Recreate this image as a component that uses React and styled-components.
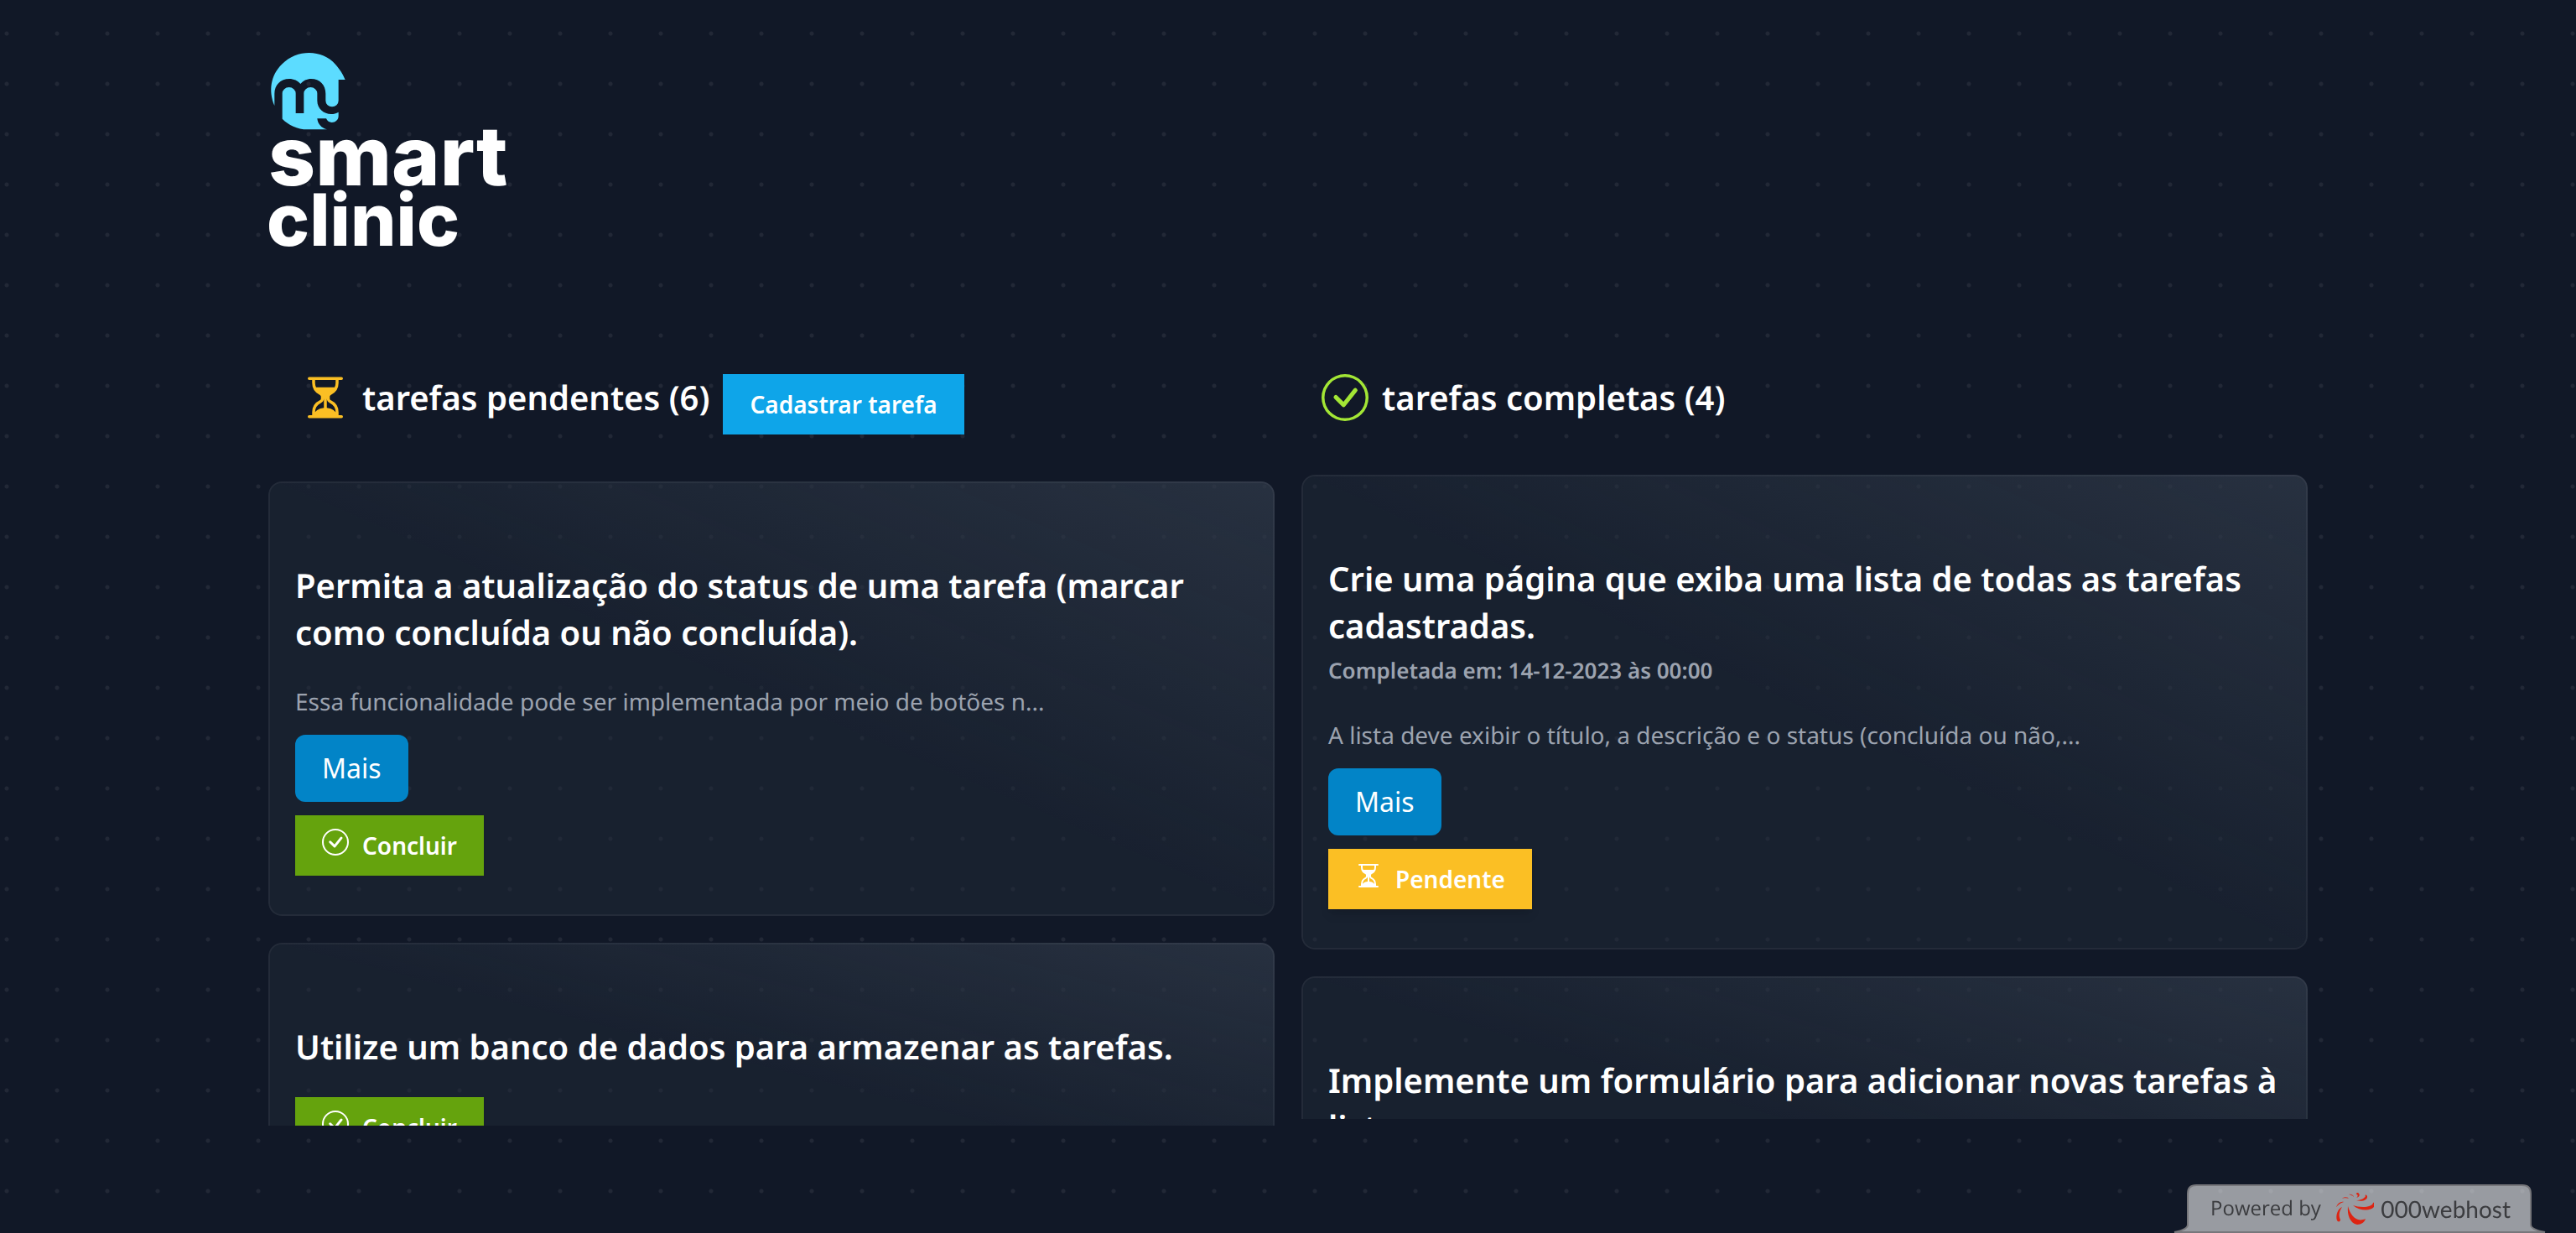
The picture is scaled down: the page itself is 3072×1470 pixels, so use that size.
import React from "react";
import styled, { createGlobalStyle } from "styled-components";
import { BsCheckCircle, BsHourglassSplit } from "react-icons/bs";

const GlobalStyle = createGlobalStyle`
  *, *::before, *::after { box-sizing: border-box; }
  body {
    margin: 0;
    background-color: #111827;
    font-family: "Noto Sans", "Open Sans", sans-serif;
    font-size: 32px;
    line-height: 48px;
    color: #fff;
    text-rendering: geometricPrecision;
  }
  h1, h2, h3, p { margin: 0; }
`;

const Page = styled.div`
  min-height: 100vh;
  background-image: radial-gradient(circle, rgba(255, 255, 255, 0.07) 2px, transparent 3px);
  background-size: 60px 60px;
  background-position: -22px 10px;
`;

const Container = styled.main`
  max-width: 2560px;
  margin: 0 auto;
  padding: 64px;
`;

const LogoSvg = styled.svg`
  display: block;
  width: 286px;
  height: 230px;
  overflow: visible;
`;

const LogoText = styled.text`
  font-family: Inter, sans-serif;
  font-weight: 800;
  font-size: ${(p) => p.$size}px;
  fill: #fff;
`;

const Board = styled.div`
  display: grid;
  grid-template-columns: repeat(2, minmax(0, 1fr));
  gap: 32px;
  margin-top: 152px;
`;

const ColumnHeader = styled.header`
  display: flex;
  align-items: flex-start;
  gap: 16px;
  padding-left: ${(p) => p.$indent}px;
  margin-bottom: ${(p) => p.$space}px;
`;

const HeaderIcon = styled.span`
  display: flex;
  color: ${(p) => p.$color};
`;

const ColumnTitle = styled.h2`
  font-size: 40px;
  line-height: 56px;
  font-weight: 600;
`;

const List = styled.div`
  display: flex;
  flex-direction: column;
  gap: 32px;
  height: 768px;
  overflow-y: auto;
  scrollbar-width: none;
`;

const CardBox = styled.article`
  display: flex;
  flex-direction: column;
  align-items: flex-start;
  flex-shrink: 0;
  padding: 96px 32px 48px;
  border-radius: 16px;
  background-color: rgba(31, 41, 55, 0.5);
  background-image: linear-gradient(to bottom left, rgba(55, 65, 81, 0.5), transparent, transparent);
  box-shadow: inset 0 0 0 0 #fff, inset 0 0 0 2px rgba(255, 255, 255, 0.05);
`;

const CardTitle = styled.h3`
  font-size: 40px;
  line-height: 56px;
  font-weight: 600;
`;

const CompletedAt = styled.div`
  height: 48px;
  color: #9ca3af;

  small {
    font-size: 26px;
    font-weight: 600;
  }
`;

const Description = styled.p`
  margin: 32px 0 16px;
  font-size: 28px;
  line-height: 46px;
  color: #9ca3af;
`;

const MoreButton = styled.button`
  border: 0;
  border-radius: 12px;
  padding: 16px 32px;
  background: #0284c7;
  color: #fff;
  font: inherit;
`;

const ActionButton = styled.button`
  display: flex;
  align-items: flex-start;
  gap: 16px;
  border: 0;
  padding: 16px 32px;
  margin-top: ${(p) => p.$top || 0}px;
  background: ${(p) => p.$color};
  color: #fff;
  font-family: inherit;
  font-size: 28px;
  line-height: 40px;
  font-weight: 600;
  box-shadow: ${(p) =>
    p.$raised
      ? "0 8px 12px -2px rgba(0, 0, 0, 0.1), 0 4px 8px -4px rgba(0, 0, 0, 0.1)"
      : "0 2px 4px rgba(0, 0, 0, 0.05)"};
`;

const HostBadge = styled.a`
  position: fixed;
  right: 36px;
  bottom: 0;
  display: flex;
  align-items: center;
  width: 444px;
  height: 58px;
  padding: 0 42px 0 44px;
  color: #3b3c3f;
  text-decoration: none;
  white-space: nowrap;
  font-family: "Open Sans", sans-serif;
  font-size: 24px;
  line-height: 32px;
`;

const BadgeShape = styled.svg`
  position: absolute;
  inset: 0;
  width: 100%;
  height: 100%;
`;

const BadgeLabel = styled.span`
  position: relative;
`;

const BadgeMark = styled.svg`
  position: relative;
  flex-shrink: 0;
  width: 48px;
  height: 40px;
  margin: 0 8px 0 auto;
`;

const BadgeBrand = styled.span`
  position: relative;
  font-family: Lato, sans-serif;
  font-size: 28px;
`;

function Logo() {
  return (
    <LogoSvg viewBox="60 72 858 690" role="img" aria-label="smart clinic">
      <path
        fill="#5cdcff"
        d="M82 258C60 205 68 150 108 110C165 53 255 58 300 110C318 130 328 148 335 165L311 165V240A23 22 0 0 1 265 240V215C265 184 244 162 213 162C198 162 184 169 175 180C166 169 151 162 135 162C104 162 82 184 82 215Z"
      />
      <path
        fill="#5cdcff"
        d="M110 305V214A24 22 0 0 1 158 214V285H187V214A24 22 0 0 1 235 214V240C235 269 258 288 285 288C294 288 303 286 311 281V295C311 309 300 318 287 318C278 318 271 313 267 304H235C237 323 248 337 270 343H200C163 343 132 327 110 305Z"
      />
      <LogoText x="60" y="543" $size={294}>smart</LogoText>
      <LogoText x="54" y="760" $size={258}>clinic</LogoText>
    </LogoSvg>
  );
}

const pending = [
  {
    title: "Permita a atualização do status de uma tarefa (marcar como concluída ou não concluída).",
    description: "Essa funcionalidade pode ser implementada por meio de botões n...",
  },
  { title: "Utilize um banco de dados para armazenar as tarefas." },
];

const completed = [
  {
    title: "Crie uma página que exiba uma lista de todas as tarefas cadastradas.",
    completedAt: "14-12-2023 às 00:00",
    description: "A lista deve exibir o título, a descrição e o status (concluída ou não,...",
  },
  { title: "Implemente um formulário para adicionar novas tarefas à lista." },
];

function Card({ task, done }) {
  return (
    <CardBox>
      <CardTitle>{task.title}</CardTitle>
      {task.completedAt && (
        <CompletedAt>
          <small>Completada em: {task.completedAt}</small>
        </CompletedAt>
      )}
      {task.description && (
        <>
          <Description>{task.description}</Description>
          <MoreButton type="button">Mais</MoreButton>
        </>
      )}
      <ActionButton
        type="button"
        $top={task.description ? 16 : 32}
        $color={done ? "#fbbf24" : "#65a30d"}
        $raised={done}
      >
        {done ? <BsHourglassSplit size={32} /> : <BsCheckCircle size={32} />}
        {done ? "Pendente" : "Concluir"}
      </ActionButton>
    </CardBox>
  );
}

export default function App() {
  return (
    <>
      <GlobalStyle />
      <Page>
        <Container>
          <Logo />
          <Board>
            <section>
              <ColumnHeader $indent={40} $space={56}>
                <HeaderIcon $color="#fbbf24">
                  <BsHourglassSplit size={56} />
                </HeaderIcon>
                <ColumnTitle>tarefas pendentes (6)</ColumnTitle>
                <ActionButton type="button" $color="#0ea5e9">
                  Cadastrar tarefa
                </ActionButton>
              </ColumnHeader>
              <List>
                {pending.map((task) => (
                  <Card key={task.title} task={task} />
                ))}
              </List>
            </section>
            <section>
              <ColumnHeader $indent={24} $space={64}>
                <HeaderIcon $color="#a3e635">
                  <BsCheckCircle size={56} />
                </HeaderIcon>
                <ColumnTitle>tarefas completas (4)</ColumnTitle>
              </ColumnHeader>
              <List>
                {completed.map((task) => (
                  <Card key={task.title} task={task} done />
                ))}
              </List>
            </section>
          </Board>
        </Container>
        <HostBadge href="#000webhost">
          <BadgeShape viewBox="0 0 444 58" preserveAspectRatio="none" aria-hidden="true">
            <path
              fill="rgba(255,255,255,0.57)"
              stroke="#77777b"
              strokeWidth="2"
              d="M1 57Q17 54 17 48V11Q17 1 27 1H416Q426 1 426 11V48Q426 54 443 57Z"
            />
          </BadgeShape>
          <BadgeLabel>Powered by</BadgeLabel>
          <BadgeMark viewBox="0 0 48 40" fill="#dd2412" aria-hidden="true">
            <path d="M17 17C16 27 19 37 28 39C33 39 37 36 38 32C27 37 20 28 17 17Z" />
            <path d="M23 16C31 23 44 23 48 18C50 15 48 12 47 13C46 19 31 19 23 16Z" />
            <path d="M27 10C33 12 41 10 40 5C38 2 37 4 38 5C37 8 31 10 27 10Z" />
            <path d="M27 7C31 6 32 3 29 1C27 1 26 3 28 3C29 4 29 6 27 7Z" />
            <path d="M4 34C2 28 5 20 10 18C6 24 6 29 8 33C8 36 5 36 4 34Z" />
            <path d="M3 18C5 13 9 11 12 12C8 13 6 15 3 18Z" />
            <path d="M10 8C13 5 17 6 18 8C15 7 12 7 10 8ZM18 3C21 2 24 4 24 6C22 4 20 4 18 3Z" opacity=".7" />
          </BadgeMark>
          <BadgeBrand>000webhost</BadgeBrand>
        </HostBadge>
      </Page>
    </>
  );
}
